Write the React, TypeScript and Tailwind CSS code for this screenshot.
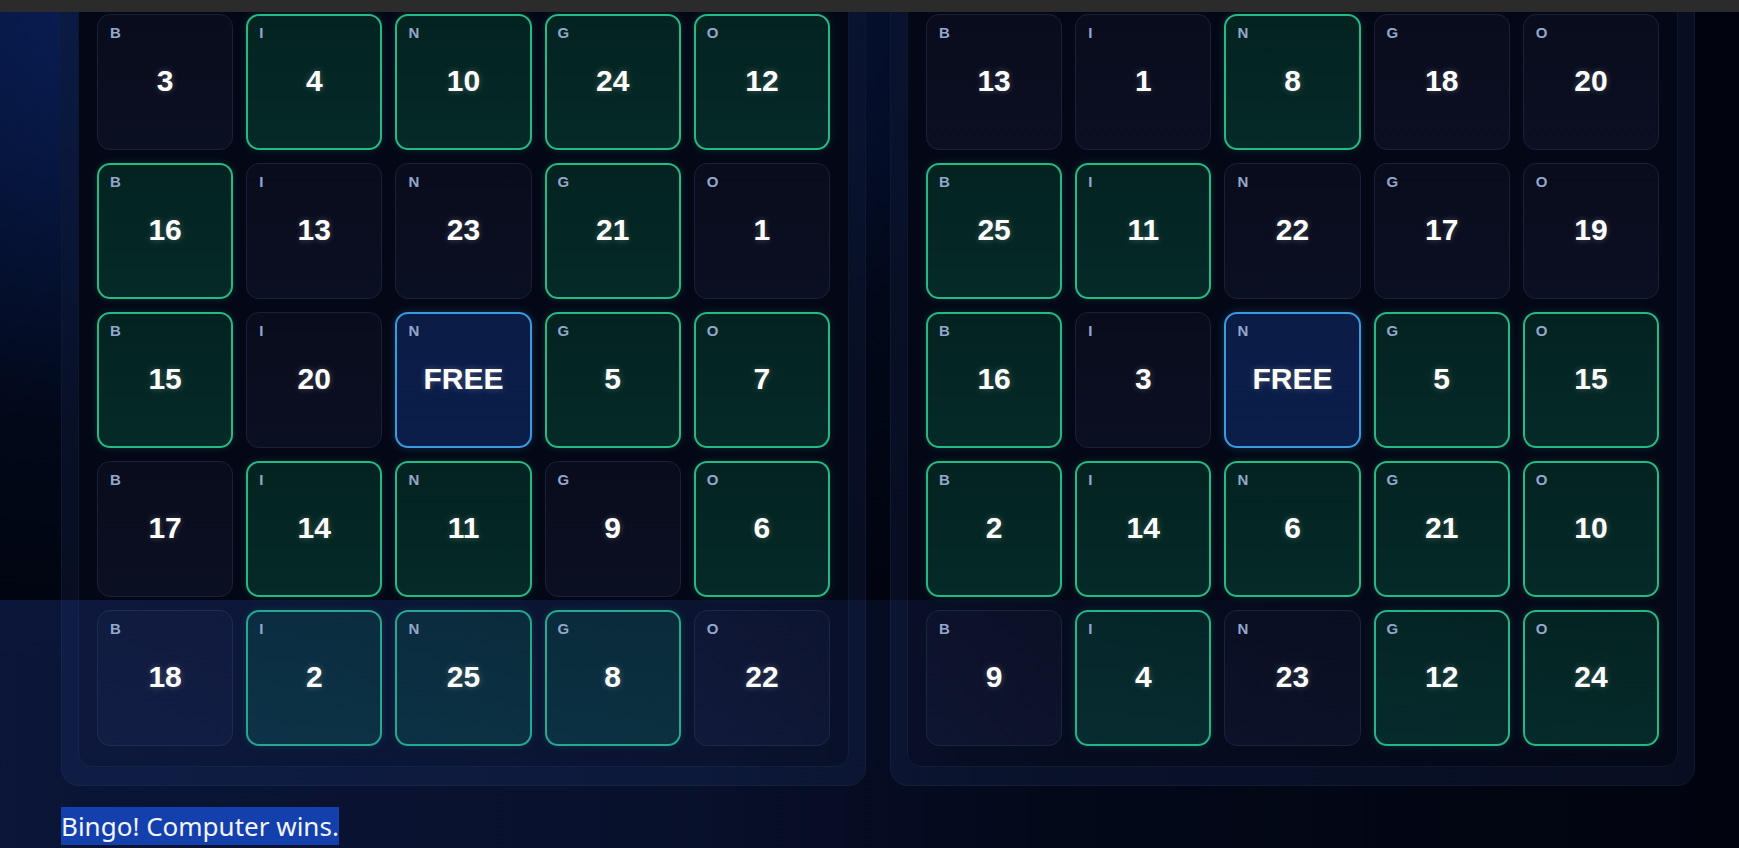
import React from "react";

type Cell = { v: string; m?: boolean; free?: boolean };

const LETTERS = ["B", "I", "N", "G", "O"];

const left: Cell[][] = [
  [{ v: "3" }, { v: "4", m: true }, { v: "10", m: true }, { v: "24", m: true }, { v: "12", m: true }],
  [{ v: "16", m: true }, { v: "13" }, { v: "23" }, { v: "21", m: true }, { v: "1" }],
  [{ v: "15", m: true }, { v: "20" }, { v: "FREE", free: true }, { v: "5", m: true }, { v: "7", m: true }],
  [{ v: "17" }, { v: "14", m: true }, { v: "11", m: true }, { v: "9" }, { v: "6", m: true }],
  [{ v: "18" }, { v: "2", m: true }, { v: "25", m: true }, { v: "8", m: true }, { v: "22" }],
];

const right: Cell[][] = [
  [{ v: "13" }, { v: "1" }, { v: "8", m: true }, { v: "18" }, { v: "20" }],
  [{ v: "25", m: true }, { v: "11", m: true }, { v: "22" }, { v: "17" }, { v: "19" }],
  [{ v: "16", m: true }, { v: "3" }, { v: "FREE", free: true }, { v: "5", m: true }, { v: "15", m: true }],
  [{ v: "2", m: true }, { v: "14", m: true }, { v: "6", m: true }, { v: "21", m: true }, { v: "10", m: true }],
  [{ v: "9" }, { v: "4", m: true }, { v: "23" }, { v: "12", m: true }, { v: "24", m: true }],
];

function BingoCell({ cell, letter }: { cell: Cell; letter: string }) {
  const thick = cell.m || cell.free;
  const box = cell.free
    ? "border-2 border-[#3c9ae0] bg-[linear-gradient(180deg,#0b1c46,#0a1e4a)] shadow-[0_0_8px_rgba(60,150,230,0.25)]"
    : cell.m
    ? "border-2 border-[#25b984] bg-[linear-gradient(180deg,#032320,#052a28)] shadow-[0_0_8px_rgba(20,190,140,0.18)]"
    : "border border-[#1a2037] bg-[linear-gradient(180deg,#090c1c,#0b0f22)]";
  const labelPos = thick ? "left-[11px] top-[9px]" : "left-[12px] top-[10px]";
  return (
    <div className={`relative flex h-[136px] items-center justify-center rounded-[13px] ${box}`}>
      <span className={`absolute z-20 ${labelPos} text-[15px] font-bold leading-none text-[#93a7cd]`}>{letter}</span>
      <span className="relative z-20 -mt-[3px] text-[30px] font-bold leading-none text-white [text-shadow:0_0_6px_rgba(255,255,255,0.25)]">
        {cell.v}
      </span>
    </div>
  );
}

function Board({ data }: { data: Cell[][] }) {
  return (
    <div className="rounded-[18px] border border-[#0f182e] bg-[rgba(14,24,52,0.5)] px-[16px] pb-[18px] pt-[16px]">
      <div className="rounded-[14px] border border-[#0f172b] bg-[#040816] px-[18px] pb-[20px] pt-[18px]">
        <div className="grid grid-cols-5 gap-[13px]">
          {data.map((row, r) =>
            row.map((c, i) => <BingoCell key={`${r}-${i}`} cell={c} letter={LETTERS[i]} />)
          )}
        </div>
      </div>
    </div>
  );
}

export default function App() {
  return (
    <div className="relative h-[848px] w-full overflow-hidden bg-[#01040f] bg-[radial-gradient(ellipse_75%_80%_at_15%_0%,#0b2260_0%,#06143a_35%,#020818_65%,#01040f_100%)] font-['Liberation_Sans',Arial,sans-serif]">
      <div className="absolute inset-x-0 top-0 z-30 h-[12px] bg-[#2b2b2c]" />
      <div className="-mt-[22px] pl-[61px]">
        <div className="grid w-[1634px] grid-cols-2 gap-[24px]">
          <Board data={left} />
          <Board data={right} />
        </div>
        <div className="relative z-20 mt-[21px] font-['Noto_Sans',sans-serif] text-[26px] leading-[38px] text-[#f2f5fb]">
          <span className="bg-[#1440ae] py-[1px]">Bingo! Computer wins.</span>
        </div>
      </div>
      <div className="pointer-events-none absolute inset-x-0 bottom-0 top-[600px] z-10 bg-[linear-gradient(90deg,rgba(45,85,200,0.22)_0%,rgba(45,85,200,0.15)_40%,rgba(45,85,200,0.06)_60%,rgba(45,85,200,0.02)_85%,rgba(45,85,200,0)_100%)]" />
    </div>
  );
}
